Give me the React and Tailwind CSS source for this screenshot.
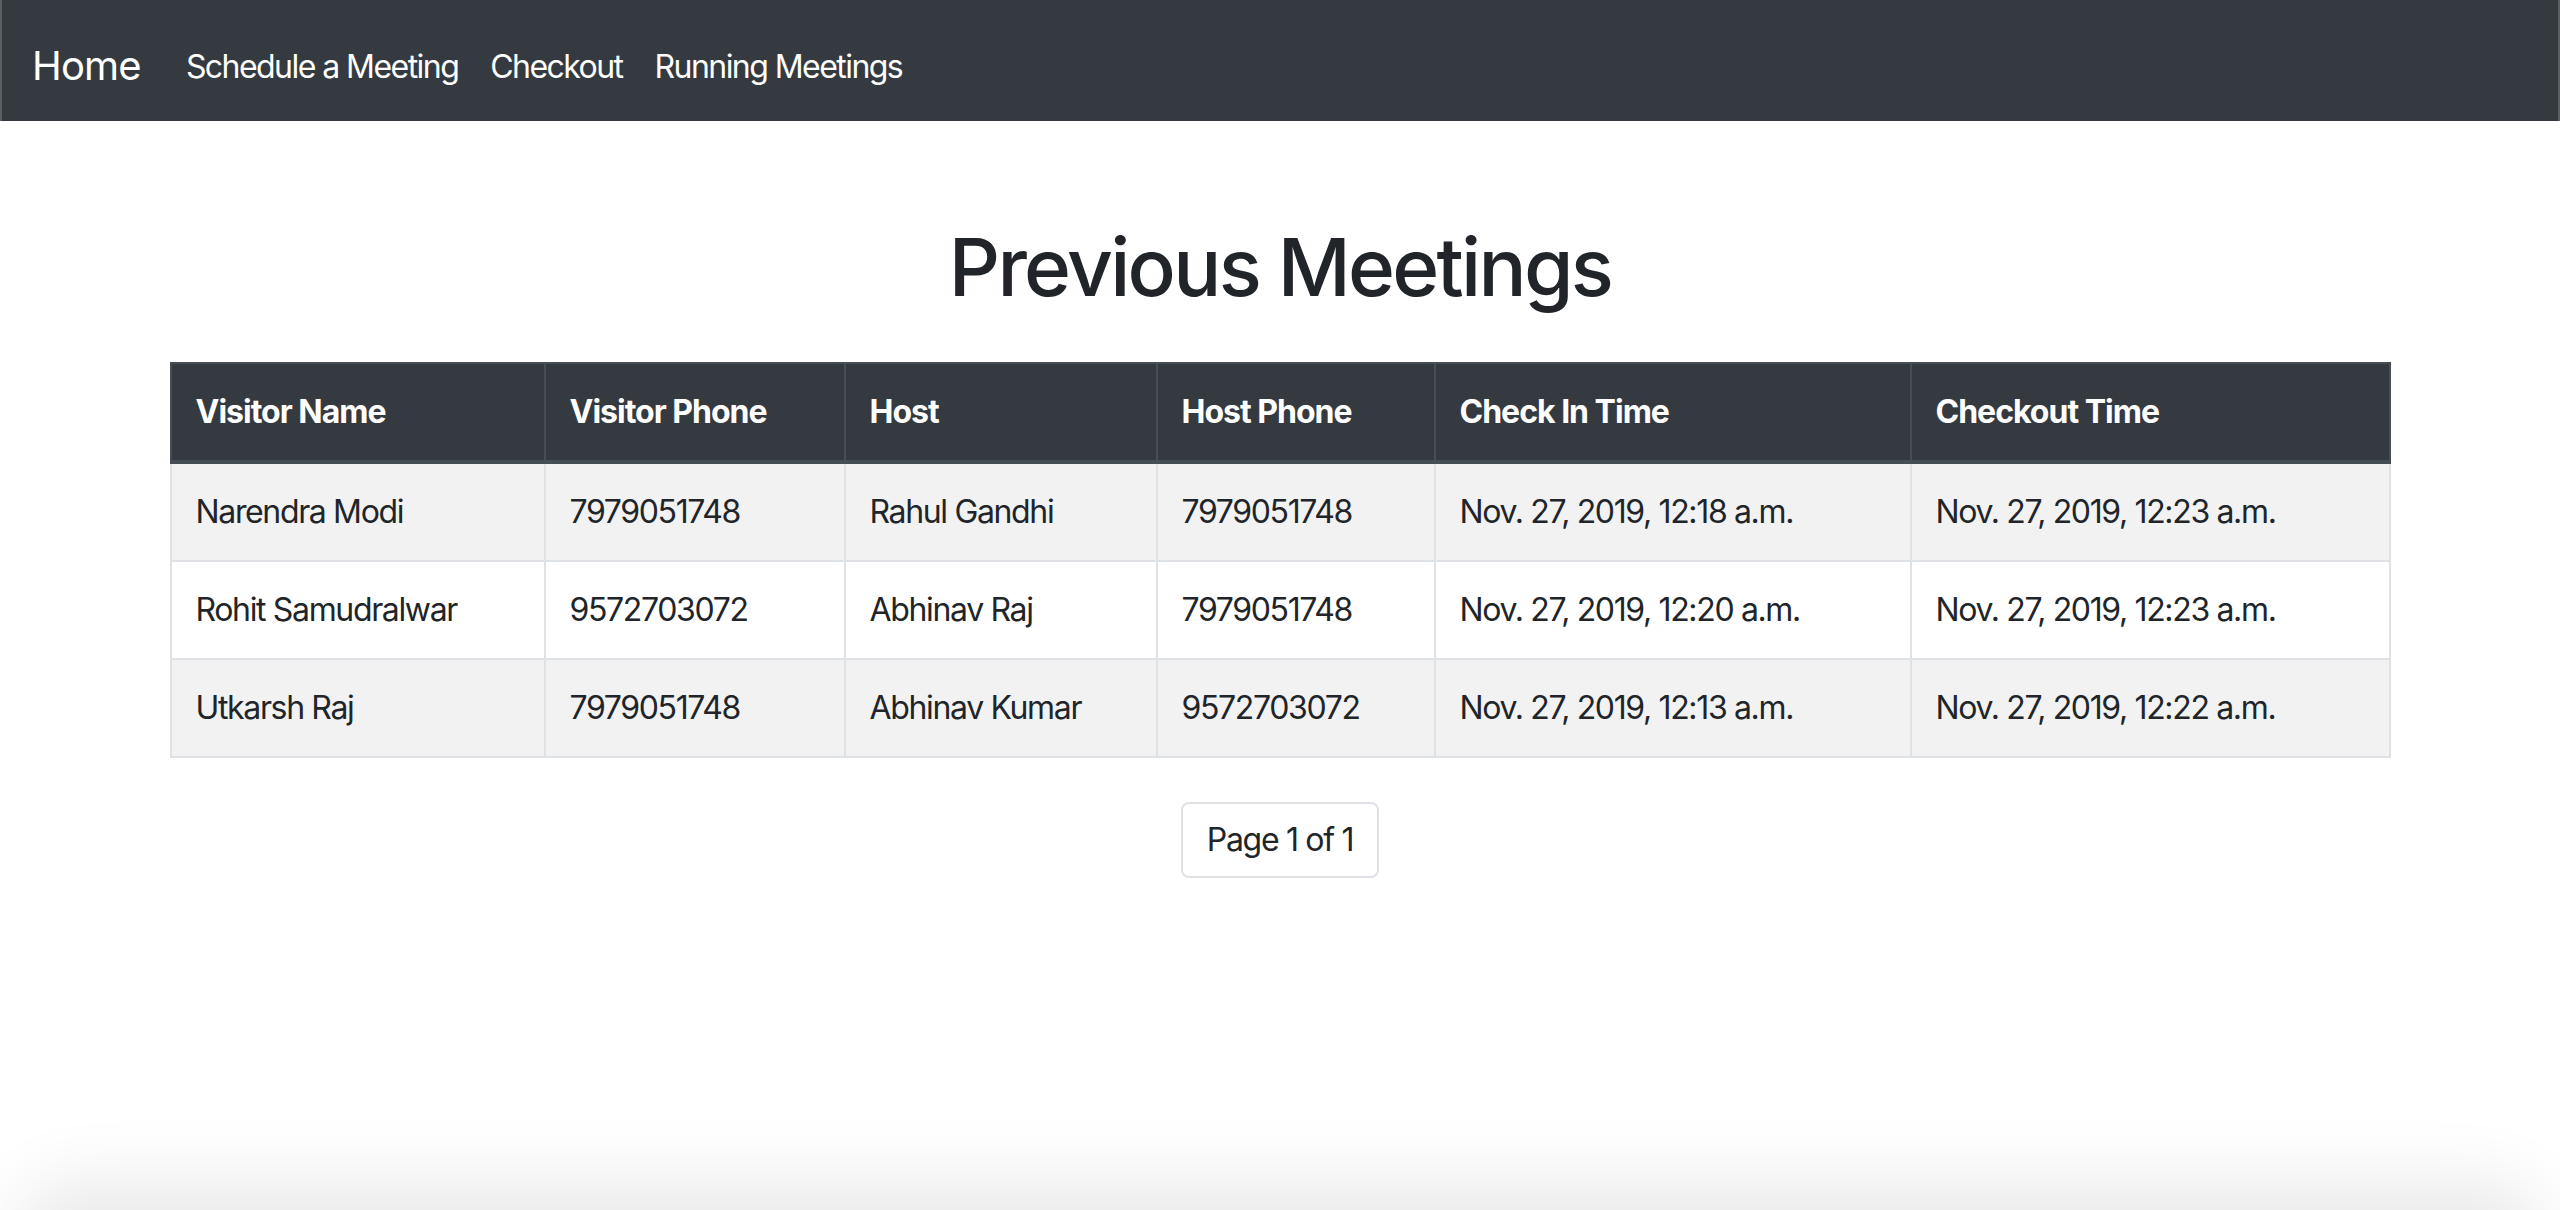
const meetings = [
  { visitor: 'Narendra Modi', visitorPhone: '7979051748', host: 'Rahul Gandhi', hostPhone: '7979051748', checkIn: 'Nov. 27, 2019, 12:18 a.m.', checkOut: 'Nov. 27, 2019, 12:23 a.m.' },
  { visitor: 'Rohit Samudralwar', visitorPhone: '9572703072', host: 'Abhinav Raj', hostPhone: '7979051748', checkIn: 'Nov. 27, 2019, 12:20 a.m.', checkOut: 'Nov. 27, 2019, 12:23 a.m.' },
  { visitor: 'Utkarsh Raj', visitorPhone: '7979051748', host: 'Abhinav Kumar', hostPhone: '9572703072', checkIn: 'Nov. 27, 2019, 12:13 a.m.', checkOut: 'Nov. 27, 2019, 12:22 a.m.' },
];

const columns = [
  { label: 'Visitor Name', width: 'w-[374px]' },
  { label: 'Visitor Phone', width: 'w-[300px]' },
  { label: 'Host', width: 'w-[312px]' },
  { label: 'Host Phone', width: 'w-[278px]' },
  { label: 'Check In Time', width: 'w-[476px]' },
  { label: 'Checkout Time', width: 'w-[479px]' },
];

function Navbar() {
  return (
    <nav className="h-[121px] bg-[#343a40] border-x-2 border-[#5b5e63] flex items-start pl-[30px]">
      <a className="mt-[36px] text-[40px] leading-[60px] tracking-[-0.8px] text-white mr-[29px]">Home</a>
      <div className="flex mt-[43px] text-[32px] leading-[48px] tracking-[-1.55px] text-white">
        <a className="px-[16px]">Schedule a Meeting</a>
        <a className="px-[16px]">Checkout</a>
        <a className="px-[16px]">Running Meetings</a>
      </div>
    </nav>
  );
}

export default function App() {
  return (
    <div className="h-[1210px] overflow-hidden flex flex-col bg-white text-[#212529] font-['Inter','Noto_Sans',sans-serif]">
      <Navbar />
      <main className="w-[2219px] mx-auto flex flex-col items-center">
        <h1 className="mt-[98px] mb-[47px] text-[80px] leading-[96px] font-medium tracking-[-2.7px]">Previous Meetings</h1>
        <table className="w-full table-fixed border-collapse text-[32px] leading-[48px] tracking-[-1.35px]">
          <thead>
            <tr className="bg-[#343a40] text-white">
              {columns.map((c) => (
                <th key={c.label} className={`${c.width} text-left font-bold tracking-[-1px] px-[24px] py-[24px] border-2 border-[#454d55] border-b-4`}>
                  {c.label}
                </th>
              ))}
            </tr>
          </thead>
          <tbody>
            {meetings.map((m, i) => (
              <tr key={m.visitor} className={i % 2 === 0 ? 'bg-[#f2f2f2]' : 'bg-white'}>
                {[m.visitor, m.visitorPhone, m.host, m.hostPhone, m.checkIn, m.checkOut].map((v, j) => (
                  <td key={j} className="px-[24px] py-[24px] border-2 border-[#dee2e6]">{v}</td>
                ))}
              </tr>
            ))}
          </tbody>
        </table>
        <div className="mt-[44px] border-2 border-[#dee2e6] rounded-[8px] px-[24px] py-[16px] text-[32px] leading-[40px] tracking-[-1.3px]">
          Page 1 of 1
        </div>
      </main>
      <div className="mt-auto h-[110px] overflow-hidden flex justify-center items-end">
        <div className="w-[2480px] h-[80px] -mb-[80px] rounded-[60px] bg-[#e6e6e6] shadow-[0_0_70px_30px_rgba(0,0,0,0.085)]" />
      </div>
    </div>
  );
}
